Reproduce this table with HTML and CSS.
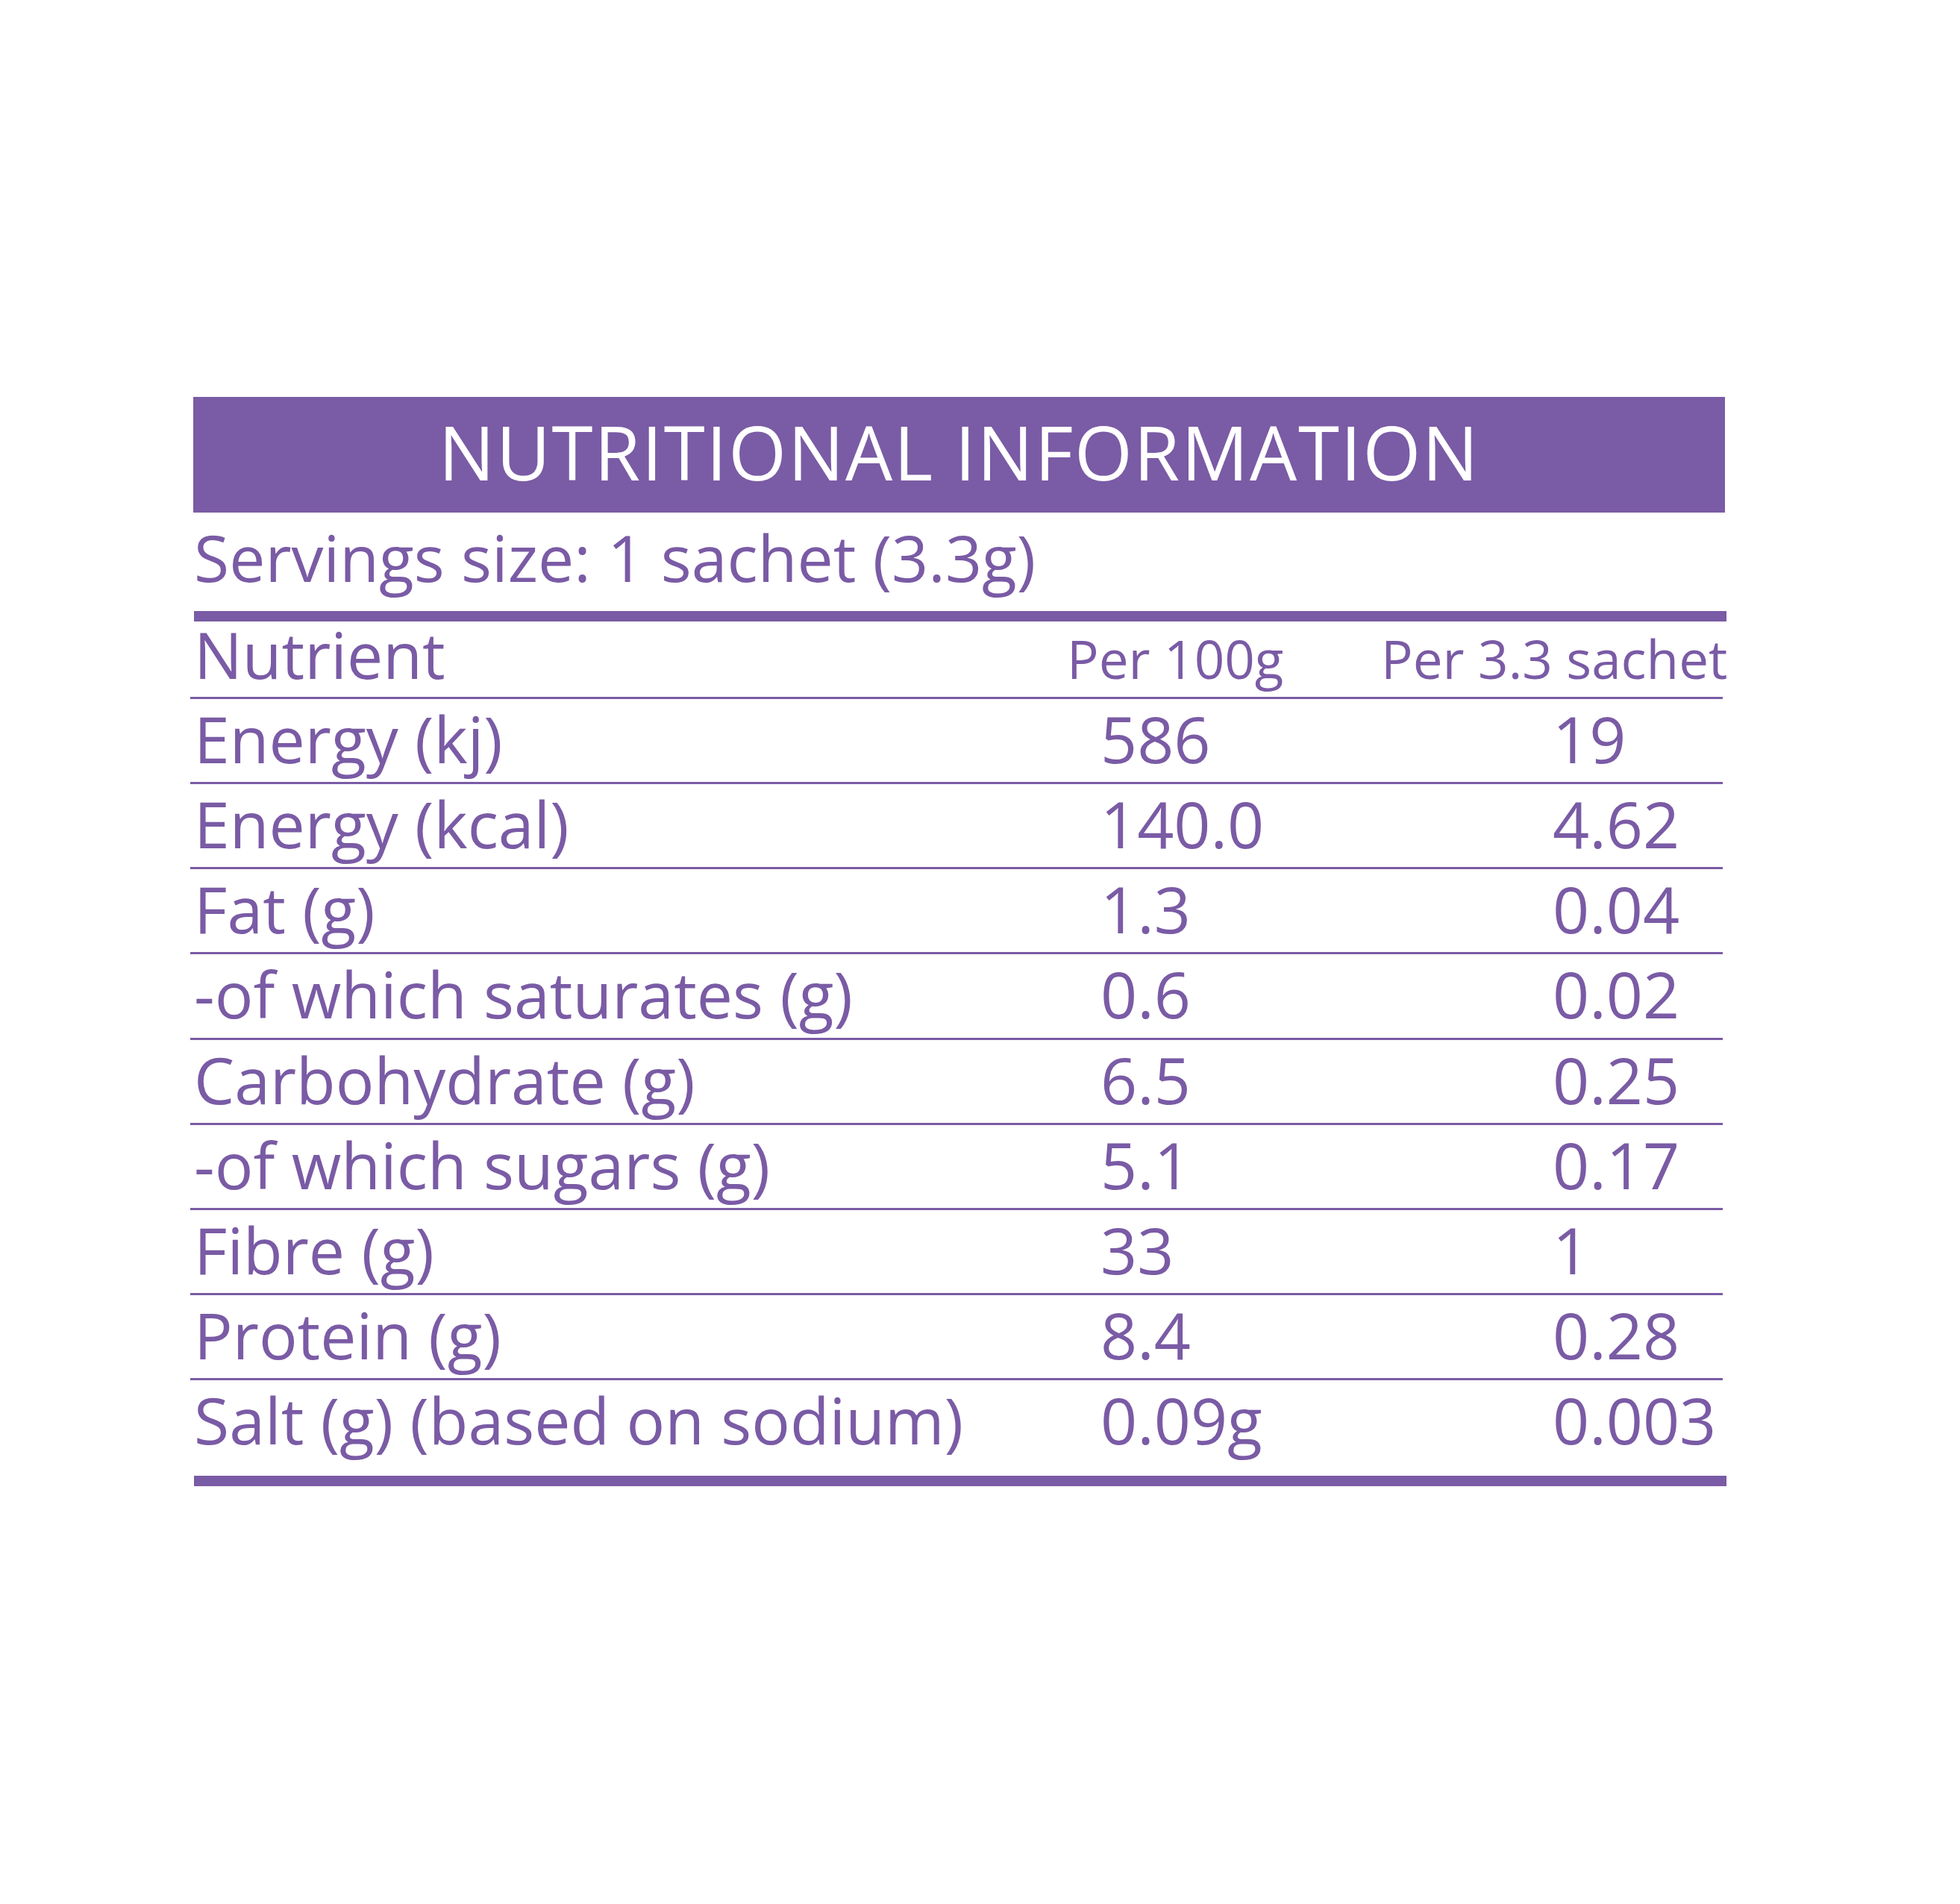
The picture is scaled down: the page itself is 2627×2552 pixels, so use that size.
FILE: index.html
```html
<!DOCTYPE html>
<html lang="en">
<head>
<meta charset="utf-8">
<title>Nutritional Information</title>
<link rel="stylesheet" href="styles.css">
</head>
<body>
<main class="page">
  <h1 class="banner">NUTRITIONAL INFORMATION</h1>
  <p class="serving">Servings size: 1 sachet (3.3g)</p>
  <div class="thick"></div>
  <div class="table">
    <div class="row head">
      <div class="c1">Nutrient</div>
      <div class="c2">Per 100g</div>
      <div class="c3">Per 3.3 sachet</div>
    </div>
    <div class="row"><div class="c1">Energy (kj)</div><div class="c2 v">586</div><div class="c3 v">19</div></div>
    <div class="row"><div class="c1">Energy (kcal)</div><div class="c2 v">140.0</div><div class="c3 v">4.62</div></div>
    <div class="row"><div class="c1">Fat (g)</div><div class="c2 v">1.3</div><div class="c3 v">0.04</div></div>
    <div class="row"><div class="c1">-of which saturates (g)</div><div class="c2 v">0.6</div><div class="c3 v">0.02</div></div>
    <div class="row"><div class="c1">Carbohydrate (g)</div><div class="c2 v">6.5</div><div class="c3 v">0.25</div></div>
    <div class="row"><div class="c1">-of which sugars (g)</div><div class="c2 v">5.1</div><div class="c3 v">0.17</div></div>
    <div class="row"><div class="c1">Fibre (g)</div><div class="c2 v">33</div><div class="c3 v">1</div></div>
    <div class="row"><div class="c1">Protein (g)</div><div class="c2 v">8.4</div><div class="c3 v">0.28</div></div>
    <div class="row"><div class="c1">Salt (g) (based on sodium)</div><div class="c2 v">0.09g</div><div class="c3 v">0.003</div></div>
  </div>
  <div class="thick bottom"></div>
</main>
</body>
</html>
```

FILE: styles.css
```css
html, body {
  margin: 0;
  padding: 0;
  background: #ffffff;
}

body {
  font-family: "Open Sans", "Noto Sans", "Liberation Sans", sans-serif;
  color: #7a5ba5;
}

.page {
  padding: 532px 0 0 255px;
  width: 2060px;
}

.banner {
  margin: 0 0 0 4px;
  width: 2053px;
  background: #7a5ba5;
  color: #ffffff;
  font-size: 100px;
  font-weight: 400;
  line-height: 146px;
  padding-bottom: 9px;
  text-align: center;
  letter-spacing: 1.8px;
}

.serving {
  margin: 0 0 12px 5px;
  font-size: 86px;
  line-height: 120px;
  white-space: nowrap;
}

.thick {
  margin-left: 5px;
  width: 2054px;
  height: 14px;
  background: #7a5ba5;
}

.thick.bottom {
  margin-top: 17px;
}

.table {
  width: 2054px;
}

.row {
  display: grid;
  grid-template-columns: 1175px 421px 1fr;
  align-items: baseline;
  font-size: 86px;
  line-height: 87px;
  padding: 9px 0 15.125px;
  border-top: 3px solid #7a5ba5;
  white-space: nowrap;
}

.row.head {
  border-top: none;
  padding: 0 0 14px;
}

.c1 {
  padding-left: 5px;
}

.head .c2,
.head .c3 {
  font-size: 71px;
  line-height: 75px;
}

.c2.v {
  padding-left: 45px;
}

.c3.v {
  padding-left: 230px;
}
```
